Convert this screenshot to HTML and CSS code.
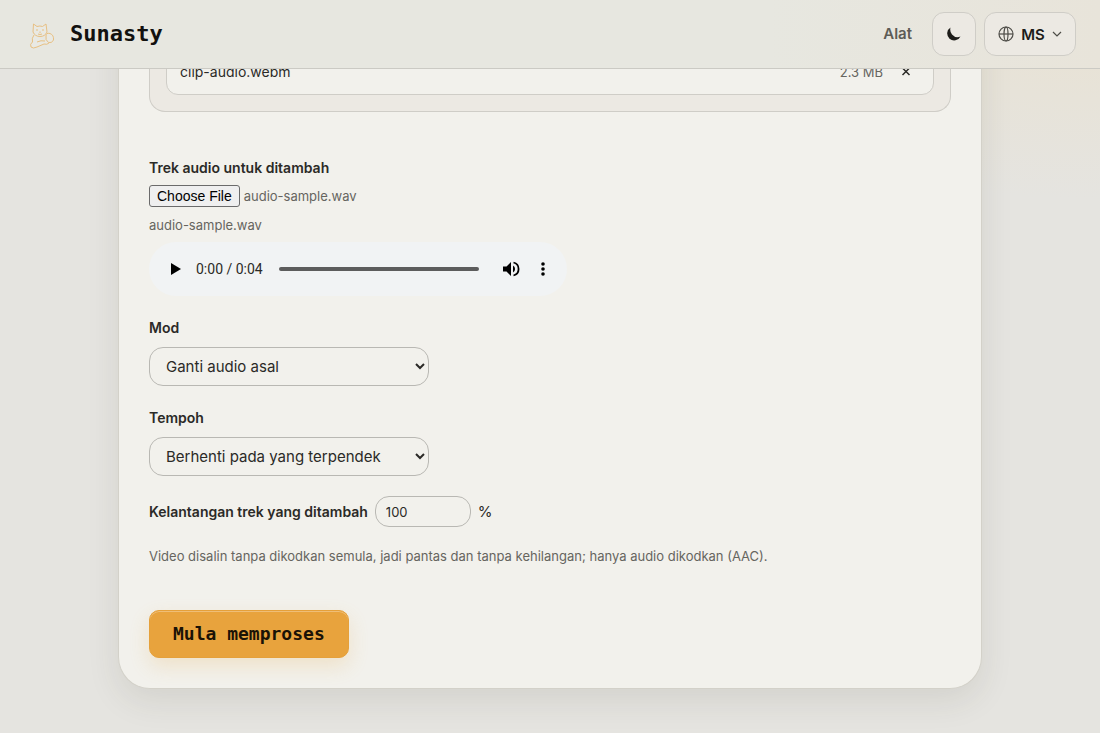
FILE: index.html
```html
<!DOCTYPE html>
<html lang="ms">
<head>
<meta charset="utf-8">
<meta name="viewport" content="width=device-width, initial-scale=1">
<title>Sunasty</title>
<link rel="stylesheet" href="styles.css">
</head>
<body>
	<header class="site-header">
		<a class="brand" href="#">
			<svg class="brand-logo" viewBox="0 0 36 36" aria-hidden="true">
				<path d="M9 16 L9.500 8 L13 10.500 Q16 9.500 18.500 10.500 L22 8 L23 16 Q21 20.500 16 20.500 Q11 20.500 9 16Z" />
				<path d="M12 14h2M18 14h2M16 15.500v1.500M14 18q2 1 4 0" />
				<path d="M10 19 Q7.500 22 8.500 26 Q5.500 28 7 31 Q9 33 13 31 L20 28 Q23 29 25 27 M13 26 Q17 24 21 25" />
				<path d="M22 20 Q22 16.500 26 17.500 Q30 19 29.500 24 Q28 27.500 24.500 26.500 Q21 24 22 20Z" />
			</svg>
			<span class="brand-name">Sunasty</span>
		</a>
		<nav class="site-nav">
			<a class="nav-link" href="#">Alat</a>
			<button class="header-btn theme-btn" type="button" aria-label="Tema gelap">
				<svg width="14" height="14" viewBox="0 0 14 14" aria-hidden="true">
					<path d="M3.500 0.500 A7 7 0 1 0 13.500 9.500 A7.500 7.500 0 0 1 5 7.500 Q2.500 4.500 3.500 0.500Z" fill="currentColor" />
				</svg>
			</button>
			<button class="header-btn lang-btn" type="button">
				<svg width="16" height="16" viewBox="0 0 16 16" fill="none" stroke="currentColor" stroke-width="1.200" aria-hidden="true">
					<circle cx="8" cy="8" r="7" />
					<ellipse cx="8" cy="8" rx="2" ry="7" />
					<path d="M1 8h14" />
				</svg>
				<span>MS</span>
				<svg width="10" height="10" viewBox="0 0 10 10" fill="none" stroke="currentColor" stroke-width="1.200" aria-hidden="true">
					<path d="M1 3l4 4 4-4" />
				</svg>
			</button>
		</nav>
	</header>

	<main class="card">
		<div class="dropzone">
			<div class="file-row">
				<span class="file-name">clip-audio.webm</span>
				<span class="file-size">2.3 MB</span>
				<button class="file-remove" type="button" aria-label="Buang">
					<svg width="10" height="10" viewBox="0 0 10 10" fill="none" stroke="currentColor" stroke-width="1.500" aria-hidden="true">
						<path d="M1.500 1l7 7M8.500 1l-7 7" />
					</svg>
				</button>
			</div>
		</div>

		<form class="options">
			<div class="track">
				<label class="label" for="track">Trek audio untuk ditambah</label>
				<input class="track-input" type="file" id="track" accept="audio/*">
				<p class="track-name">audio-sample.wav</p>
				<div class="player">
					<button class="player-btn" type="button" aria-label="Main">
						<svg width="10" height="12" viewBox="0 0 10 12" aria-hidden="true"><path d="M0 0l10 6-10 6z" /></svg>
					</button>
					<span class="player-time">0:00 / 0:04</span>
					<input class="player-seek" type="range" min="0" max="4" value="0" aria-label="Kedudukan">
					<button class="player-btn" type="button" aria-label="Bisu">
						<svg width="18" height="16" viewBox="0 0 18 16" aria-hidden="true">
							<path d="M1 5.500v5h3.500L9 15V1L4.500 5.500z" />
							<path d="M11 4.500a4 4 0 0 1 0 7z" />
							<path d="M11.500 1.500a6.700 6.700 0 0 1 0 13" fill="none" stroke="#000" stroke-width="1.800" />
						</svg>
					</button>
					<button class="player-btn" type="button" aria-label="Lagi">
						<svg width="4" height="14" viewBox="0 0 4 14" aria-hidden="true">
							<circle cx="2" cy="2" r="1.800" /><circle cx="2" cy="7" r="1.800" /><circle cx="2" cy="12" r="1.800" />
						</svg>
					</button>
				</div>
			</div>

			<div class="field">
				<label class="label" for="mode">Mod</label>
				<select class="select" id="mode">
					<option>Ganti audio asal</option>
				</select>
			</div>

			<div class="field">
				<label class="label" for="duration">Tempoh</label>
				<select class="select" id="duration">
					<option>Berhenti pada yang terpendek</option>
				</select>
			</div>

			<div class="volume">
				<label class="label" for="volume">Kelantangan trek yang ditambah</label>
				<input class="volume-input" type="number" id="volume" min="0" max="200" value="100">
				<span>%</span>
			</div>

			<p class="note">Video disalin tanpa dikodkan semula, jadi pantas dan tanpa kehilangan; hanya audio dikodkan (AAC).</p>

			<button class="start-btn" type="button">Mula memproses</button>
		</form>
	</main>
	<script src="script.js"></script>
</body>
</html>
```

FILE: styles.css
```css
* {
	box-sizing: border-box;
}

body {
	margin: 0;
	min-height: 100vh;
	padding: 0 24px 44px;
	background: radial-gradient(ellipse 420px 200px at 100% 0, #e9e2d2, rgba(233, 226, 210, 0)) no-repeat #e5e4e0;
	color: #2b2a27;
	font: 15px/24px Inter, "Liberation Sans", sans-serif;
}

p {
	margin: 0;
}

button,
input,
select {
	font-family: inherit;
	color: inherit;
}

/* header */
.site-header {
	position: fixed;
	top: 0;
	left: 0;
	right: 0;
	z-index: 10;
	display: flex;
	align-items: center;
	justify-content: space-between;
	padding: 12px 24px;
	border-bottom: 1px solid #cbcac4;
	background: linear-gradient(90deg, #e7e7e0 70%, #e8e4da);
}

.brand {
	display: flex;
	align-items: center;
	gap: 10px;
	color: #12110f;
	text-decoration: none;
}

.brand-logo {
	width: 36px;
	height: 36px;
	fill: rgba(255, 255, 255, 0.15);
	stroke: #e8b76c;
	stroke-width: 1;
	opacity: 0.8;
}

.brand-name {
	font: bold 22px/28px "DejaVu Sans Mono", monospace;
}

.site-nav {
	display: flex;
	align-items: center;
	gap: 8px;
}

.nav-link {
	margin-right: 12px;
	color: #5d5c56;
	font-size: 15px;
	font-weight: 600;
	text-decoration: none;
}

.header-btn {
	display: flex;
	align-items: center;
	justify-content: center;
	gap: 8px;
	height: 44px;
	border: 1px solid #cfcdc7;
	border-radius: 12px;
	background: #ece9e3;
	color: #1d1c19;
	font-size: 15px;
	font-weight: 600;
}

.theme-btn {
	width: 44px;
	padding: 0;
}

.lang-btn {
	gap: 7px;
	width: 92px;
	padding: 0;
}

.lang-btn svg {
	color: #4d4c47;
}

/* card */
.card {
	max-width: 864px;
	margin: 0 auto;
	padding: 32px 30px 30px;
	border: 1px solid #d3d1c9;
	border-top: 0;
	border-radius: 0 0 32px 32px;
	background: #f2f1ec;
	box-shadow: 0 12px 32px rgba(60, 60, 40, 0.1);
}

.dropzone {
	padding: 16px;
	border: 1px solid #cfcdc7;
	border-top: 0;
	border-radius: 0 0 16px 16px;
	background: #ece9e3;
}

.file-row {
	display: flex;
	align-items: center;
	height: 47px;
	padding: 0 13px;
	border: 1px solid #cfcdc7;
	border-radius: 12px;
	background: #f2f1ec;
	font-size: 14px;
}

.file-name {
	flex: 1;
}

.file-size {
	margin-right: 9px;
	color: #66655f;
	font-size: 13px;
}

.file-remove {
	display: flex;
	align-items: center;
	justify-content: center;
	width: 28px;
	height: 28px;
	padding: 0;
	border: 0;
	background: none;
}

/* options */
.options {
	display: flex;
	flex-direction: column;
	align-items: flex-start;
	gap: 20px;
	margin-top: 44px;
}

.label {
	font-size: 14px;
	font-weight: 600;
}

.track {
	display: flex;
	flex-direction: column;
	gap: 5px;
	width: 418px;
	max-width: 100%;
}

.track-input {
	height: 23px;
	color: #66655f;
	font-size: 13px;
	line-height: 22px;
}

.track-input::file-selector-button {
	height: 22px;
	padding: 0 7px;
	border: 1px solid #6b6b6b;
	border-radius: 3px;
	background: #efefef;
	color: #000;
	font: 14px "Liberation Sans", sans-serif;
}

.track-name,
.note {
	color: #66655f;
	font-size: 13px;
}

.player {
	display: flex;
	align-items: center;
	height: 54px;
	padding: 0 8px 0 11px;
	border-radius: 27px;
	background: #f1f3f4;
}

.player-btn {
	display: flex;
	align-items: center;
	justify-content: center;
	flex: none;
	width: 32px;
	height: 32px;
	padding: 0;
	border: 0;
	background: none;
}

.player-time {
	margin: 0 16px 0 4px;
	font: 14px/20px Roboto, sans-serif;
}

.player-seek {
	flex: 1;
	min-width: 0;
	height: 4px;
	margin: 0 16px 0 0;
	border-radius: 2px;
	background: #5c5c5c;
	appearance: none;
}

.player-seek::-webkit-slider-thumb {
	appearance: none;
	width: 0;
	height: 0;
}

.field {
	display: flex;
	flex-direction: column;
	gap: 7px;
	width: 280px;
	max-width: 100%;
}

.select {
	height: 39px;
	padding: 0 0 0 12px;
	border: 1px solid #b9b8b3;
	border-radius: 14px;
	background: #f2f1ec;
	font-size: 15px;
}

.volume {
	display: flex;
	align-items: center;
	gap: 7px;
}

.volume-input {
	width: 96px;
	height: 31px;
	padding: 0 10px;
	border: 1px solid #b9b8b3;
	border-radius: 14px;
	background: #f2f1ec;
	font-size: 13px;
}

.note {
	margin-top: -3px;
}

.start-btn {
	height: 48px;
	margin-top: 22px;
	padding: 0 23px;
	border: 1px solid #e5a03a;
	border-radius: 10px;
	background: #e8a33d;
	box-shadow: inset 0 1px 0 rgba(255, 255, 255, 0.3), 0 8px 20px rgba(232, 163, 61, 0.2);
	color: #1a1206;
	font: bold 18px/24px "DejaVu Sans Mono", monospace;
}
```

FILE: script.js
```js
// preselect the sample track
var picked = new DataTransfer();
picked.items.add(new File([""], "audio-sample.wav", { type: "audio/wav" }));
document.getElementById("track").files = picked.files;
```
